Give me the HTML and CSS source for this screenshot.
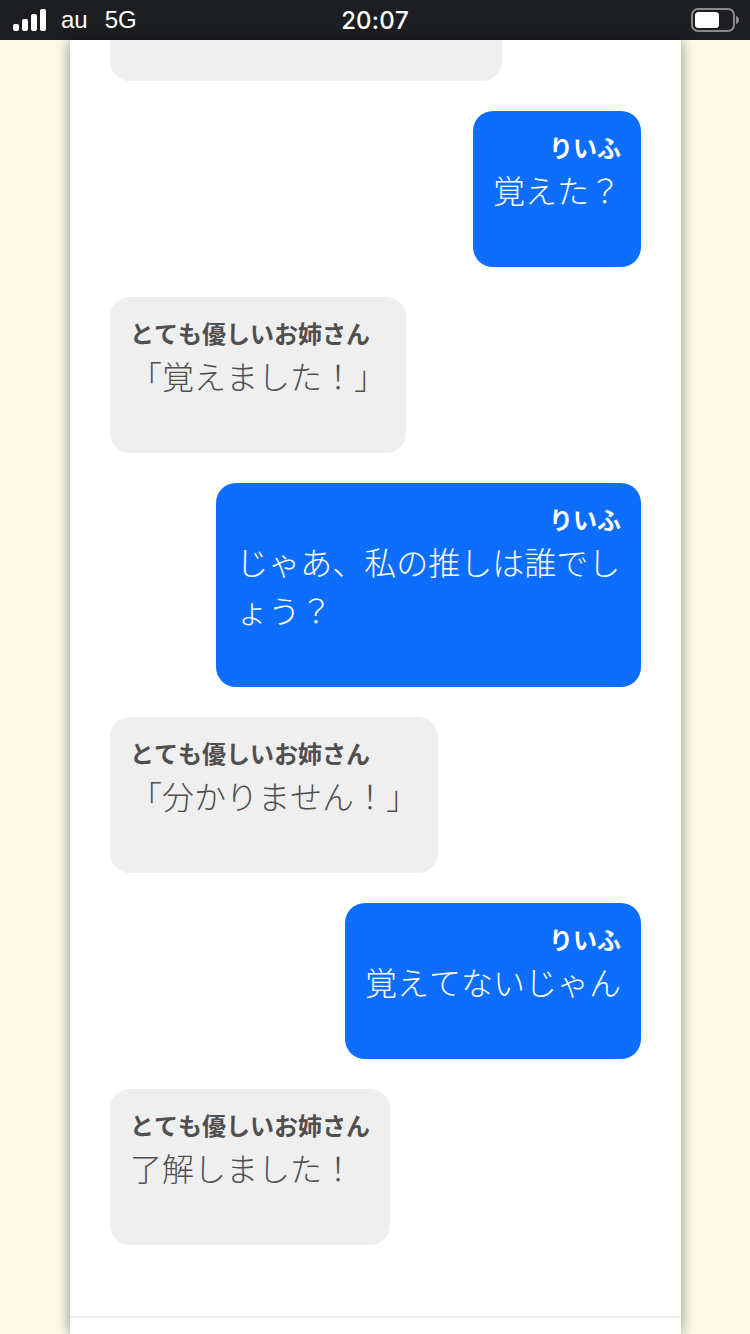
FILE: index.html
```html
<!DOCTYPE html>
<html lang="ja">
<head>
    <meta charset="UTF-8">
    <meta name="viewport" content="width=device-width, initial-scale=1.0">
    <link rel="stylesheet" href="styles.css">
    <title>チャット</title>
</head>
<body>

    <div class="status-bar">
        <div class="status-left">
            <svg class="signal" width="33" height="22" viewBox="0 0 33 22">
                <rect x="0" y="15" width="6" height="7" rx="2" fill="#fff"/>
                <rect x="9" y="10" width="6" height="12" rx="2" fill="#fff"/>
                <rect x="18" y="5" width="6" height="17" rx="2" fill="#fff"/>
                <rect x="27" y="0" width="6" height="22" rx="2" fill="#fff"/>
            </svg>
            <span class="carrier">au</span>
            <span class="network">5G</span>
        </div>
        <div class="status-time">20:07</div>
        <div class="status-right">
            <svg class="battery" width="48" height="24" viewBox="0 0 48 24">
                <rect x="1" y="1" width="42" height="22" rx="6" fill="none" stroke="#8a8a8d" stroke-width="2"/>
                <rect x="4" y="4" width="24" height="16" rx="3.5" fill="#fff"/>
                <path d="M45 8 C47 8.500 48 10 48 12 C48 14 47 15.500 45 16 Z" fill="#8a8a8d"/>
            </svg>
        </div>
    </div>

    <div class="panel">
        <div class="messages">
            <div class="bubble other cut-off"></div>

            <div class="bubble mine">
                <div class="name">りいふ</div>
                <p class="text">覚えた？</p>
            </div>

            <div class="bubble other">
                <div class="name">とても優しいお姉さん</div>
                <p class="text">「覚えました！」</p>
            </div>

            <div class="bubble mine">
                <div class="name">りいふ</div>
                <p class="text">じゃあ、私の推しは誰でしょう？</p>
            </div>

            <div class="bubble other">
                <div class="name">とても優しいお姉さん</div>
                <p class="text">「分かりません！」</p>
            </div>

            <div class="bubble mine">
                <div class="name">りいふ</div>
                <p class="text">覚えてないじゃん</p>
            </div>

            <div class="bubble other">
                <div class="name">とても優しいお姉さん</div>
                <p class="text">了解しました！</p>
            </div>
        </div>
        <div class="input-area"></div>
    </div>

</body>
</html>
```

FILE: styles.css
```css
html, body {
    height: 1334px;
    overflow: hidden;
}

body {
    font-family: "Noto Sans CJK JP", "Noto Sans", sans-serif;
    font-kerning: none;
    margin: 0;
    padding: 0;
    background-color: #fffbe9;
}

.status-bar {
    height: 40px;
    background-color: #1d1e22;
    color: #fff;
    display: flex;
    align-items: center;
    padding: 0 13px;
    box-sizing: border-box;
    font-family: "Liberation Sans", Arial, sans-serif;
}

.status-left, .status-right {
    flex: 1;
    display: flex;
    align-items: center;
}

.status-left {
    font-size: 24px;
}

.status-right {
    justify-content: flex-end;
}

.signal {
    margin-right: 15px;
}

.carrier {
    margin-right: 18px;
}

.network {
    margin-left: -1px;
}

.status-time {
    font-family: "Inter", "Liberation Sans", sans-serif;
    font-size: 24px;
    font-weight: 500;
    letter-spacing: 0.2px;
}

.battery {
    margin-right: -2px;
}

.panel {
    width: 611px;
    margin-left: 70px;
    background-color: #fff;
    box-shadow: 0 0 14px rgba(0, 0, 0, 0.45);
    height: 1294px;
    overflow: hidden;
}

.messages {
    display: flex;
    flex-direction: column;
    gap: 30px;
    padding: 0 40px 71px;
}

.bubble {
    box-sizing: border-box;
    max-width: 80%;
    padding: 18px 20px 22px;
    border-radius: 20px;
}

.bubble.mine {
    align-self: flex-end;
    background-color: #0d6efd;
    color: #fff;
}

.bubble.other {
    align-self: flex-start;
    background-color: #efefef;
    color: #4f4f4f;
}

.bubble.cut-off {
    width: 392px;
    height: 41px;
    padding: 0;
    border-radius: 0 0 20px 20px;
}

.name {
    font-size: 24px;
    font-weight: 700;
    line-height: 36px;
}

.mine .name {
    text-align: right;
}

.text {
    font-size: 32px;
    font-weight: 300;
    line-height: 48px;
    margin: 0 0 32px;
    line-break: loose;
}

.input-area {
    border-top: 2px solid #eeeeee;
    height: 16px;
}
```
